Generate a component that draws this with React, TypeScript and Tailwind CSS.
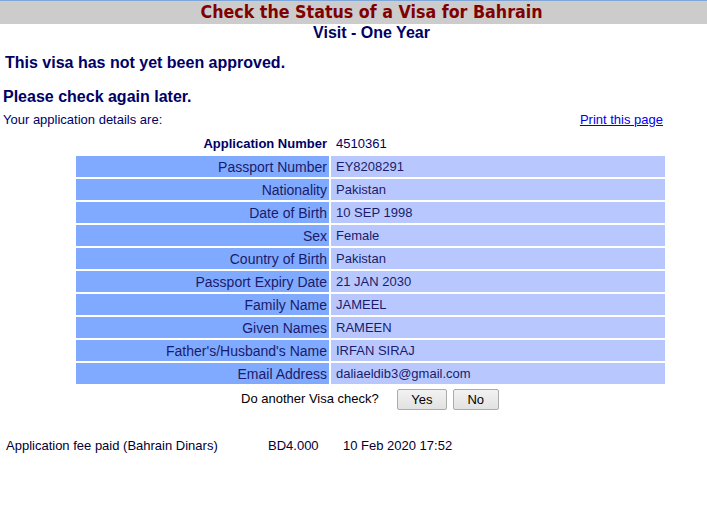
import React from 'react';

const rows: [string, string][] = [
  ['Passport Number', 'EY8208291'],
  ['Nationality', 'Pakistan'],
  ['Date of Birth', '10 SEP 1998'],
  ['Sex', 'Female'],
  ['Country of Birth', 'Pakistan'],
  ['Passport Expiry Date', '21 JAN 2030'],
  ['Family Name', 'JAMEEL'],
  ['Given Names', 'RAMEEN'],
  ["Father's/Husband's Name", 'IRFAN SIRAJ'],
  ['Email Address', 'daliaeldib3@gmail.com'],
];

export default function App() {
  return (
    <div className="min-h-[509px] bg-white font-['Liberation_Sans',Arial,sans-serif] text-[#000066]">
      {/* Header band */}
      <div className="h-[1px] bg-[#7ea6d8]" />
      <div className="h-[23px] bg-[#cccccc] flex items-center justify-center pl-[36px]">
        <h1 className="font-['DejaVu_Sans_Condensed','DejaVu_Sans',sans-serif] font-bold text-[17.7px] leading-none text-[#800000]">
          Check the Status of a Visa for Bahrain
        </h1>
      </div>
      <h2 className="text-center font-bold text-[16px] leading-[18px] pl-[36px]">Visit - One Year</h2>

      <div className="px-[5px]">
        <p className="mt-[11px] font-bold text-[16px] leading-[20px]">This visa has not yet been approved.</p>
        <p className="mt-[14px] font-bold text-[16px] leading-[20px] -ml-[2px]">Please check again later.</p>
        <div className="flex justify-between items-end text-[13px] leading-[15px] -ml-[2px] mt-[3px]">
          <span>Your application details are:</span>
          <a href="#" className="text-[#0000ee] underline mr-[39px] mt-[2px]">Print this page</a>
        </div>
      </div>

      <table className="ml-[74px] mt-[4px] border-separate border-spacing-[2px] text-[14px] leading-[16px]">
        <tbody>
          <tr>
            <td className="w-[253px] h-[21px] text-right pr-[2px] font-bold text-[13px]">Application Number</td>
            <td className="w-[334px] pl-[5px] text-[13px]">4510361</td>
          </tr>
          {rows.map(([label, value]) => (
            <tr key={label}>
              <td className="h-[21px] text-right pr-[2px] bg-[#80aaff] text-[#1b1b6b]">{label}</td>
              <td className="pl-[5px] bg-[#b8c8ff] text-[#1b1b6b] text-[13px]">{value}</td>
            </tr>
          ))}
          <tr>
            <td colSpan={2} className="pt-[3px]">
              <div className="flex items-center ml-[165px] text-[13px] text-black">
                <span className="mt-[-1px]">Do another Visa check?</span>
                <button className="ml-[18px] w-[50px] h-[21px] border border-[#acacac] rounded-[2px] bg-gradient-to-b from-[#f2f2f2] to-[#e2e2e2] text-[13px] leading-none">
                  Yes
                </button>
                <button className="ml-[6px] w-[46px] h-[21px] border border-[#acacac] rounded-[2px] bg-gradient-to-b from-[#f2f2f2] to-[#e2e2e2] text-[13px] leading-none">
                  No
                </button>
              </div>
            </td>
          </tr>
        </tbody>
      </table>

      <div className="flex mt-[26px] ml-[6px] text-[13px] leading-[15px] text-[#000033]">
        <span className="w-[262px]">Application fee paid (Bahrain Dinars)</span>
        <span className="w-[75px]">BD4.000</span>
        <span>10 Feb 2020 17:52</span>
      </div>
    </div>
  );
}
